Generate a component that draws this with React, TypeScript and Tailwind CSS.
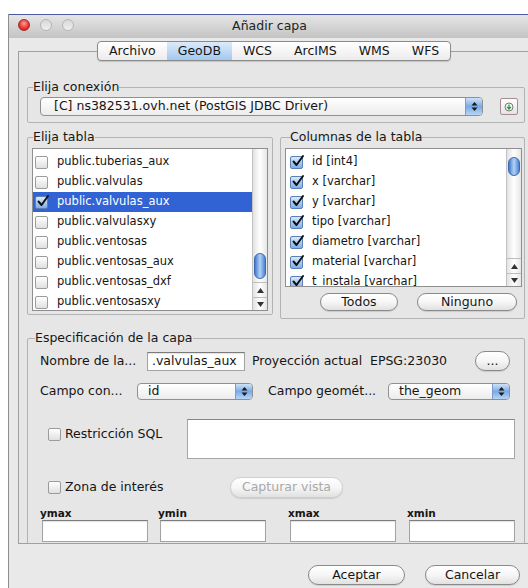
import React from 'react';

type Kids = { children?: React.ReactNode; className?: string };

function Check({ on }: { on?: boolean }) {
  if (on)
    return (
      <span className="relative w-[13px] h-[13px] shrink-0 rounded-[2px] border border-[#5a7fb6] bg-linear-to-b from-[#dbe9f9] to-[#7eaee6]">
        <svg className="absolute left-[0px] top-[-3px]" width="14" height="14" viewBox="0 0 14 14">
          <path d="M2.5 7.5 L5.5 11 L12 2" fill="none" stroke="#111" strokeWidth="2" strokeLinecap="round" strokeLinejoin="round" />
        </svg>
      </span>
    );
  return <span className="w-[13px] h-[13px] shrink-0 rounded-[2px] border border-[#9b9b9b] bg-linear-to-b from-white to-[#e0e0e0]" />;
}

function Arrows() {
  return (
    <svg width="7" height="11" viewBox="0 0 7 11">
      <path d="M3.5 1 L6.5 4.5 H0.5 Z" fill="#1a1a1a" />
      <path d="M3.5 10 L6.5 6.5 H0.5 Z" fill="#1a1a1a" />
    </svg>
  );
}

// aqua style combo box with the blue stepper cap
function Combo({ className, text, pad = 'pl-[10px]' }: { className: string; text: string; pad?: string }) {
  return (
    <div className={`flex items-stretch rounded-[4px] border border-[#909090] bg-linear-to-b from-white to-[#ececec] overflow-hidden ${className}`}>
      <span className={`flex-1 ${pad} text-[12.5px] flex items-center whitespace-nowrap overflow-hidden`}>{text}</span>
      <span className="w-[17px] border-l border-[#7d9cc8] bg-linear-to-b from-[#cfe2f8] via-[#79aae6] to-[#b8d5f4] flex items-center justify-center">
        <Arrows />
      </span>
    </div>
  );
}

function Pill({ className, children, disabled }: Kids & { disabled?: boolean }) {
  return (
    <button
      className={`rounded-full border bg-linear-to-b from-white via-[#f6f6f6] to-[#e1e1e1] text-[12.5px] flex items-center justify-center shadow-[0_1px_1px_rgba(0,0,0,0.12)] ${
        disabled ? 'border-[#cfcfcf] text-[#a9a9a9]' : 'border-[#8a8a8a] text-[#151515]'
      } ${className}`}
    >
      {children}
    </button>
  );
}

function ScrollBar({ thumb }: { thumb: string }) {
  return (
    <div className="w-[15px] shrink-0 border-l border-[#c2c2c2] bg-linear-to-r from-[#e2e2e2] via-white to-[#e6e6e6] flex flex-col">
      <div className="relative flex-1">
        <div className={`absolute left-[1px] right-[1px] rounded-full border border-[#3c69ad] bg-linear-to-r from-[#3f7bd0] via-[#b3d3f6] to-[#4a84d4] ${thumb}`} />
      </div>
      <div className="h-[15px] border-t border-[#bdbdbd] flex items-center justify-center">
        <svg width="7" height="5" viewBox="0 0 7 5"><path d="M3.5 0 L7 5 H0 Z" fill="#333" /></svg>
      </div>
      <div className="h-[13px] border-t border-[#bdbdbd] flex items-center justify-center">
        <svg width="7" height="5" viewBox="0 0 7 5"><path d="M3.5 5 L7 0 H0 Z" fill="#333" /></svg>
      </div>
    </div>
  );
}

function Group({ title, className, legend, children }: Kids & { title: string; legend: string }) {
  return (
    <fieldset className={`border border-[#b3b3b3] rounded-[2px] ${className}`}>
      <legend className={`text-[12.5px] leading-[14px] text-[#161616] ${legend}`}>{title}</legend>
      {children}
    </fieldset>
  );
}

function Field({ className, children }: Kids) {
  return (
    <div className={`border border-[#a3a3a3] border-t-[#7c7c7c] bg-white text-[12.5px] pl-[4px] flex items-center whitespace-nowrap overflow-hidden shadow-[inset_0_1px_1px_rgba(0,0,0,0.12)] ${className}`}>
      {children}
    </div>
  );
}

const tables = [
  'public.tuberias_aux',
  'public.valvulas',
  'public.valvulas_aux',
  'public.valvulasxy',
  'public.ventosas',
  'public.ventosas_aux',
  'public.ventosas_dxf',
  'public.ventosasxy',
];

const columns = ['id [int4]', 'x [varchar]', 'y [varchar]', 'tipo [varchar]', 'diametro [varchar]', 'material [varchar]', 't_instala [varchar]'];

const tabs = ['Archivo', 'GeoDB', 'WCS', 'ArcIMS', 'WMS', 'WFS'];

export default function App() {
  return (
    <div className="w-[528px] h-[588px] overflow-hidden bg-white font-['DejaVu_Sans','Liberation_Sans',sans-serif] text-[#151515]">
      <div className="mt-[14px] ml-[8px] w-[530px] h-[574px] flex flex-col bg-[#e9e9e9] border-l border-[#8e8e8e]">
        {/* title bar */}
        <div className="relative h-[24px] shrink-0 border-t border-[#4d57a3] bg-linear-to-b from-[#e6e6e6] to-[#c3c3c3] flex items-center justify-center">
          <div className="absolute left-[9px] top-[4px] flex gap-[10px]">
            <span className="w-[12px] h-[12px] rounded-full border border-[#a3282a] bg-[radial-gradient(circle_at_50%_35%,#ff9a92,#e0342c_60%,#b8221e)]" />
            <span className="w-[12px] h-[12px] rounded-full border border-[#b5b5b5] bg-linear-to-b from-[#d8d8d8] to-[#f0f0f0]" />
            <span className="w-[12px] h-[12px] rounded-full border border-[#b5b5b5] bg-linear-to-b from-[#d8d8d8] to-[#f0f0f0]" />
          </div>
          <span className="mr-[8px] text-[12.5px] text-[#222]">Añadir capa</span>
        </div>

        {/* tab selector */}
        <div className="relative z-10 mt-[3px] ml-[88px] self-start h-[20px] flex rounded-[4px] border border-[#8a8a8a] bg-linear-to-b from-white to-[#ececec] overflow-hidden shadow-[0_1px_1px_rgba(0,0,0,0.15)]">
          {tabs.map(t => (
            <span
              key={t}
              className={`px-[11px] flex items-center text-[12.5px] ${t === 'GeoDB' ? 'bg-linear-to-b from-[#dcebfb] to-[#a4c8ef]' : ''}`}
            >
              {t}
            </span>
          ))}
        </div>

        {/* tab pane */}
        <div className="-mt-[10px] ml-[9px] h-[493px] shrink-0 border-t border-l border-b border-[#a0a0a0] bg-[#e6e6e6] overflow-hidden pt-[28px] pl-[8px]">
          <Group title="Elija conexión" legend="ml-[5px]" className="w-[498px]">
            <div className="pl-[12px] pt-[3px] pb-[6px] flex items-center">
              <Combo className="w-[443px] h-[19px]" pad="pl-[13px]" text="[C] ns382531.ovh.net (PostGIS JDBC Driver)" />
              <button className="ml-[17px] w-[18px] h-[17px] rounded-[2px] border border-[#a58c8e] bg-linear-to-b from-white to-[#e4e4e4] flex items-center justify-center">
                <svg width="10" height="10" viewBox="0 0 10 10">
                  <circle cx="5" cy="5" r="4" fill="#f2f2f2" stroke="#7a7a7a" />
                  <path d="M5 2.5 V6.5 M3.2 5 L5 7 L6.8 5" fill="none" stroke="#2f9a3c" strokeWidth="1.3" />
                </svg>
              </button>
            </div>
          </Group>

          <div className="mt-[7px] flex items-start gap-[7px]">
            <Group title="Elija tabla" legend="ml-[5px]" className="w-[246px]">
              <div className="pl-[4px] pt-[4px] pb-[3px]">
                <div className="w-[236px] h-[163px] border border-[#8f8f8f] bg-white flex">
                  <div className="flex-1 pt-[3px] overflow-hidden">
                    {tables.map(t => {
                      const sel = t === 'public.valvulas_aux';
                      return (
                        <div key={t} className={`h-[20px] flex items-center gap-[9px] pl-[2px] text-[11.5px] ${sel ? 'bg-[#3163d4] text-white' : ''}`}>
                          <Check on={sel} />
                          <span>{t}</span>
                        </div>
                      );
                    })}
                  </div>
                  <ScrollBar thumb="top-[104px] h-[26px]" />
                </div>
              </div>
            </Group>

            <Group title="Columnas de la tabla" legend="ml-[9px]" className="w-[245px]">
              <div className="pl-[4px] pt-[4px] pb-[7px]">
                <div className="w-[237px] h-[139px] border border-[#8f8f8f] bg-white flex">
                  <div className="flex-1 pt-[3px] overflow-hidden">
                    {columns.map(c => (
                      <div key={c} className="h-[20px] flex items-center gap-[9px] pl-[4px] text-[11.5px]">
                        <Check on />
                        <span>{c}</span>
                      </div>
                    ))}
                  </div>
                  <ScrollBar thumb="top-[8px] h-[19px]" />
                </div>
                <div className="mt-[6px] flex">
                  <Pill className="ml-[35px] w-[78px] h-[18px]">Todos</Pill>
                  <Pill className="ml-[19px] w-[100px] h-[18px]">Ninguno</Pill>
                </div>
              </div>
            </Group>
          </div>

          <Group title="Especificación de la capa" legend="ml-[7px]" className="mt-[12px] w-[498px] h-[240px]">
            <div className="pl-[12px] pt-[6px]">
              <div className="h-[20px] flex items-center text-[12.5px]">
                <span className="w-[107px]">Nombre de la...</span>
                <Field className="w-[98px] h-[19px]">.valvulas_aux</Field>
                <span className="ml-[7px] w-[118px]">Proyección actual</span>
                <span className="w-[105px]">EPSG:23030</span>
                <Pill className="w-[35px] h-[20px] text-[10px]">...</Pill>
              </div>

              <div className="mt-[11px] h-[18px] flex items-center text-[12.5px]">
                <span className="w-[97px]">Campo con...</span>
                <Combo className="w-[116px] h-[17px]" text="id" />
                <span className="ml-[15px] w-[120px]">Campo geomét...</span>
                <Combo className="w-[122px] h-[17px]" text="the_geom" />
              </div>

              <div className="mt-[19px] flex items-start text-[12.5px]">
                <div className="w-[147px] pl-[8px] pt-[6px] flex items-center gap-[4px]">
                  <Check />
                  <span>Restricción SQL</span>
                </div>
                <div className="w-[328px] h-[40px] border border-[#a6a6a6] border-t-[#858585] bg-white" />
              </div>

              <div className="mt-[18px] h-[21px] flex items-center text-[12.5px]">
                <div className="w-[190px] pl-[8px] flex items-center gap-[4px]">
                  <Check />
                  <span>Zona de interés</span>
                </div>
                <Pill disabled className="w-[113px] h-[21px]">Capturar vista</Pill>
              </div>

              <div className="mt-[9px] flex text-[10.5px] font-bold">
                {[
                  ['ymax', 'w-[118px]'],
                  ['ymin', 'w-[130px]'],
                  ['xmax', 'w-[119px]'],
                  ['xmin', 'w-[110px]'],
                ].map(([l, w]) => (
                  <div key={l} className={`${w} flex flex-col`}>
                    <span className="h-[13px] leading-[13px]">{l}</span>
                    <Field className="ml-[2px] w-[106px] h-[22px]" />
                  </div>
                ))}
              </div>
            </div>
          </Group>
        </div>

        {/* dialog buttons */}
        <div className="mt-[21px] flex justify-end gap-[20px] pr-[18px]">
          <Pill className="w-[97px] h-[20px]">Aceptar</Pill>
          <Pill className="w-[95px] h-[20px]">Cancelar</Pill>
        </div>
      </div>
    </div>
  );
}
